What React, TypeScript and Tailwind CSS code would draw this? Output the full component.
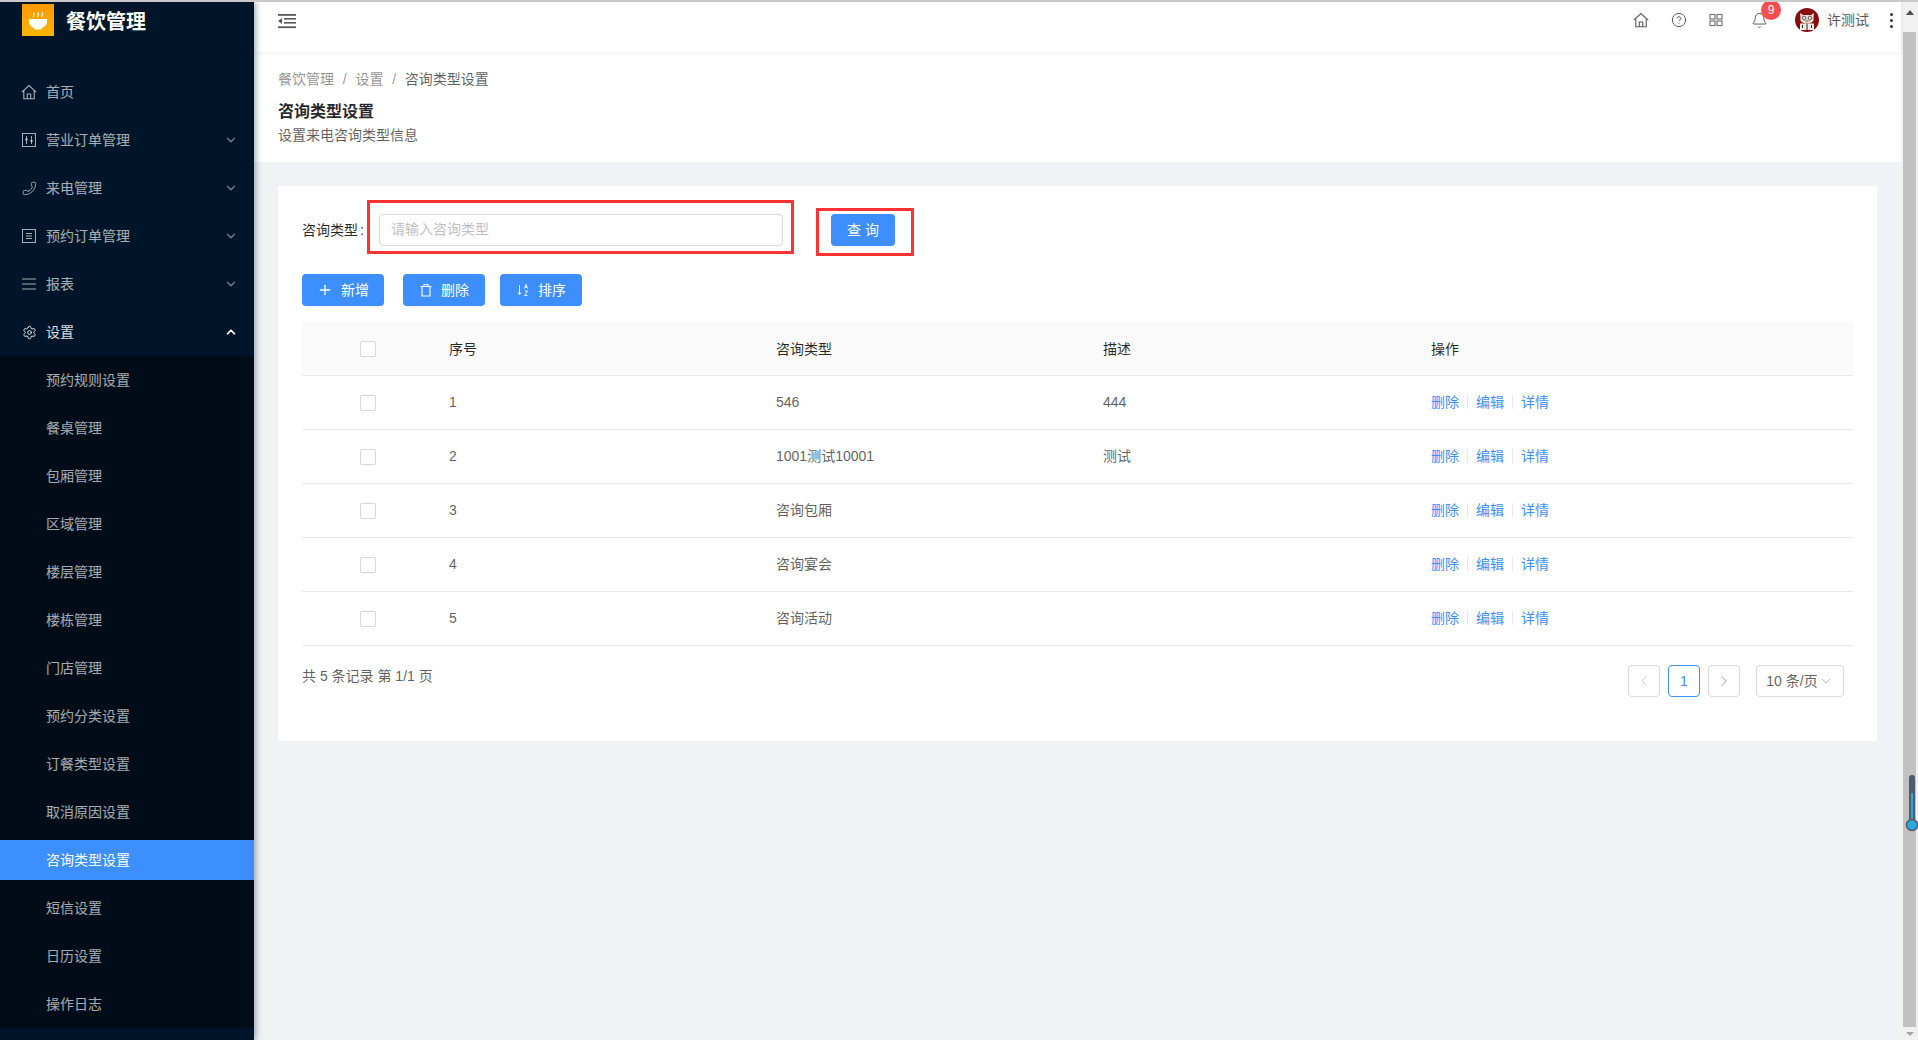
import { Bell, ChevronDown, ChevronLeft, ChevronRight, ChevronUp, CircleHelp, Phone, Plus, Settings } from 'lucide-react'
import type { ReactNode } from 'react'

function HomeIcon({ className }: { className: string }) {
  return (
    <svg viewBox="0 0 16 16" className={className} fill="none" stroke="currentColor" strokeWidth="1.1">
      <path d="M.8 8.200 8 1.500l7.200 6.700" />
      <path d="M2.800 6.500v8.200h10.400V6.500" />
      <path d="M6.300 14.700V10h3.400v4.700" />
    </svg>
  )
}

function OrderIcon() {
  return (
    <svg viewBox="0 0 14 14" className="h-[14px] w-[14px]" fill="none" stroke="currentColor" strokeWidth="1">
      <rect x="0.5" y="0.5" width="13" height="13" />
      <path d="M4.500 3v8M9.500 3v8" />
      <path d="M3.200 6.500h2.600M8.200 8h2.600" strokeWidth="1.400" />
    </svg>
  )
}

function BookIcon() {
  return (
    <svg viewBox="0 0 14 14" className="h-[14px] w-[14px]" fill="none" stroke="currentColor" strokeWidth="1">
      <rect x="0.5" y="0.5" width="13" height="13" />
      <path d="M4 4.500h6M4 7h6M4 9.500h6" />
    </svg>
  )
}

function BarsIcon() {
  return (
    <svg viewBox="0 0 14 14" className="h-[14px] w-[14px]" fill="none" stroke="currentColor" strokeWidth="1.100">
      <path d="M0 2h14M0 7h14M0 12h14" />
    </svg>
  )
}

function CollapseIcon() {
  return (
    <svg viewBox="0 0 18 16" className="h-4 w-[18px]" fill="#595959">
      <rect x="0" y="1" width="18" height="1.800" />
      <rect x="6" y="5" width="12" height="1.600" />
      <rect x="6" y="9" width="12" height="1.600" />
      <rect x="0" y="13.300" width="18" height="1.800" />
      <path d="M0 8 4 5v6z" />
    </svg>
  )
}

function GridIcon() {
  return (
    <svg viewBox="0 0 14 14" className="h-[14px] w-[14px]" fill="none" stroke="#777" strokeWidth="1.200">
      <rect x="1" y="1.500" width="5" height="4.500" />
      <rect x="8" y="1.500" width="5" height="4.500" />
      <rect x="1" y="8" width="5" height="4.500" />
      <rect x="8" y="8" width="5" height="4.500" />
    </svg>
  )
}

function SortIcon() {
  return (
    <svg viewBox="0 0 14 14" className="h-[14px] w-[14px]" fill="none" stroke="currentColor">
      <path d="M3.500 2v9.500M1.800 9.500l1.700 2.200 1.700-2.200" />
      <path d="M8.500 5.500 10 1.500l1.500 4M9 4.200h2M8.700 8h2.800L8.700 12.500h2.800" strokeWidth="0.900" />
    </svg>
  )
}

function TrashIcon() {
  return (
    <svg viewBox="0 0 14 14" className="h-[14px] w-[14px]" fill="none" stroke="currentColor" strokeWidth="1.100">
      <path d="M1.500 3.500h11M5 3.500V1.500h4v2" />
      <path d="M3 3.500v9.500h8V3.500" />
    </svg>
  )
}

function LogoIcon() {
  return (
    <div className="flex h-8 w-8 shrink-0 items-center justify-center bg-gradient-to-b from-[#ff9800] to-[#fdb500]">
      <svg viewBox="0 0 32 32" className="h-8 w-8">
        <path d="M7 15h18v2.500c0 3.500-3 6-5.500 6.500v1.500h-7V24C10 23.500 7 21 7 17.500z" fill="#fff" />
        <path d="M11.500 13c-.8-1.500 1.200-2.500.4-4.500M15.800 13c-.8-1.500 1.200-2.500.4-4.500M20 13c-.8-1.500 1.200-2.500.4-4.500" stroke="#fff" strokeWidth="1.200" fill="none" />
      </svg>
    </div>
  )
}

function Avatar() {
  return (
    <svg viewBox="0 0 24 24" className="h-6 w-6">
      <circle cx="12" cy="12" r="12" fill="#8a0a0a" />
      <path d="M5 5l3 2h8l3-2-.5 5c1 3-1.500 5.500-6.500 5.500S4.500 13 5.500 10z" fill="#e9dcd2" />
      <circle cx="9" cy="10" r="1.800" fill="none" stroke="#333" strokeWidth="0.700" />
      <circle cx="15" cy="10" r="1.800" fill="none" stroke="#333" strokeWidth="0.700" />
      <ellipse cx="12" cy="13" rx="2" ry="1.200" fill="#b89a90" />
      <rect x="5" y="15.500" width="14" height="6.500" fill="#f3eee8" />
      <path d="M12 15.500V22M7.500 17v3M16.500 17v3" stroke="#222" strokeWidth="1" />
    </svg>
  )
}

function Thermometer() {
  return (
    <svg viewBox="0 0 14 62" className="absolute left-[4px] top-[772px] h-[62px] w-[14px]">
      <rect x="4" y="1" width="6" height="50" rx="3" fill="#4d5d6b" />
      <rect x="6" y="19" width="2" height="34" fill="#2aa9e0" />
      <circle cx="7" cy="51" r="5.500" fill="#2aa9e0" stroke="#4d5d6b" strokeWidth="1.500" />
    </svg>
  )
}

const menus: { name: string; icon: ReactNode; arrow?: boolean }[] = [
  { name: '首页', icon: <HomeIcon className="-ml-px h-4 w-4" /> },
  { name: '营业订单管理', icon: <OrderIcon />, arrow: true },
  { name: '来电管理', icon: <Phone size={15} strokeWidth={1.4} className="scale-x-[-1]" />, arrow: true },
  { name: '预约订单管理', icon: <BookIcon />, arrow: true },
  { name: '报表', icon: <BarsIcon />, arrow: true },
]

const subMenus = ['预约规则设置', '餐桌管理', '包厢管理', '区域管理', '楼层管理', '楼栋管理', '门店管理', '预约分类设置', '订餐类型设置', '取消原因设置', '咨询类型设置', '短信设置', '日历设置', '操作日志']

const rows = [
  { id: 1, type: '546', desc: '444' },
  { id: 2, type: '1001测试10001', desc: '测试' },
  { id: 3, type: '咨询包厢', desc: '' },
  { id: 4, type: '咨询宴会', desc: '' },
  { id: 5, type: '咨询活动', desc: '' },
]

const gridCols = 'grid grid-cols-[131px_327px_327px_328px_1fr] items-center'

function Check() {
  return <span className="mx-auto block h-4 w-4 rounded-[2px] border border-[#d9d9d9] bg-white" />
}

function Sidebar() {
  return (
    <aside className="relative z-20 flex w-[254px] shrink-0 flex-col bg-[#001529] text-sm text-white/65 shadow-[2px_0_6px_rgba(0,21,41,0.35)]">
      <div className="flex h-[66px] gap-3 pl-[22px] pt-[2px]">
        <LogoIcon />
        <span className="mt-[2px] text-[20px] font-bold leading-8 text-white">餐饮管理</span>
      </div>
      {menus.map((m) => (
        <div key={m.name} className="flex h-12 items-center pl-[22px] pr-4">
          <span className="w-6 shrink-0">{m.icon}</span>
          <span className="flex-1 pb-px">{m.name}</span>
          {m.arrow && <ChevronDown size={14} strokeWidth={2.4} className="text-white/45" />}
        </div>
      ))}
      <div className="flex h-12 items-center pl-[22px] pr-4 text-white/85">
        <span className="w-6 shrink-0">
          <Settings size={15} strokeWidth={1.6} />
        </span>
        <span className="flex-1 pb-px">设置</span>
        <ChevronUp size={14} strokeWidth={3} className="text-white" />
      </div>
      <div className="flex flex-col bg-[#000c17]">
        {subMenus.map((s, i) => (
          <div
            key={s}
            className={i === 10 ? 'my-1 flex h-10 items-center bg-[#3d8fff] pb-px pl-[46px] text-white' : 'my-1 flex h-10 items-center pb-px pl-[46px]'}
          >
            {s}
          </div>
        ))}
      </div>
    </aside>
  )
}

function TopBar() {
  return (
    <header className="relative z-10 flex h-[50px] shrink-0 items-center justify-between bg-white pl-6 pr-[8px] shadow-[0_1px_4px_rgba(0,21,41,0.08)]">
      <div className="-mt-[12px]">
        <CollapseIcon />
      </div>
      <div className="-mt-[14px] flex items-center text-[#595959]">
        <HomeIcon className="mr-[22px] h-4 w-4" />
        <CircleHelp size={16} strokeWidth={1.5} className="mr-[22px]" />
        <GridIcon />
        <div className="relative ml-[28px] mr-[27px]">
          <Bell size={17} strokeWidth={1.4} />
          <span className="absolute -right-[13px] -top-[12px] flex h-5 min-w-5 items-center justify-center rounded-full bg-[#ff4d4f] text-xs font-medium text-white">9</span>
        </div>
        <Avatar />
        <span className="ml-2 text-sm">许测试</span>
        <span className="ml-[21px] flex flex-col gap-[3px]">
          <i className="block h-[3px] w-[3px] rounded-full bg-[#333]" />
          <i className="block h-[3px] w-[3px] rounded-full bg-[#333]" />
          <i className="block h-[3px] w-[3px] rounded-full bg-[#333]" />
        </span>
      </div>
    </header>
  )
}

function PageHead() {
  return (
    <div className="h-[110px] shrink-0 bg-white px-6 pt-4">
      <div className="flex h-[22px] items-center text-sm text-black/45">
        <span>餐饮管理</span>
        <span className="mx-[8.75px]">/</span>
        <span>设置</span>
        <span className="mx-[8.75px]">/</span>
        <span className="text-black/65">咨询类型设置</span>
      </div>
      <div className="mt-[10px] text-base font-semibold leading-6 text-black/85">咨询类型设置</div>
      <div className="text-sm leading-[22px] text-black/65">设置来电咨询类型信息</div>
    </div>
  )
}

function ActionButton({ icon, label }: { icon: ReactNode; label: string }) {
  return (
    <button className="flex h-8 w-[82px] items-center justify-center gap-2 rounded bg-[#3d8fff] text-sm text-white shadow-[0_2px_0_rgba(0,0,0,0.03)]">
      {icon}
      {label}
    </button>
  )
}

function SearchBar() {
  return (
    <div className="flex h-8 items-center text-sm text-black/65">
      <span className="w-[77px] whitespace-nowrap text-black/85">
        咨询类型<span className="ml-0.5">:</span>
      </span>
      <div className="relative">
        <input
          placeholder="请输入咨询类型"
          className="h-8 w-[404px] rounded border border-[#d9d9d9] px-[11px] pb-[2px] text-sm outline-none placeholder:text-[#bfbfbf]"
        />
        <span className="pointer-events-none absolute -left-[12px] -top-[14px] h-[54px] w-[427px] border-[3px] border-[#ff3333]" />
      </div>
      <div className="relative ml-[48px]">
        <button className="h-8 w-16 rounded bg-[#3d8fff] text-sm text-white shadow-[0_2px_0_rgba(0,0,0,0.03)]">查 询</button>
        <span className="pointer-events-none absolute -left-[15px] -top-[6px] h-[48px] w-[98px] border-[3px] border-[#ff3333]" />
      </div>
    </div>
  )
}

function DataTable() {
  return (
    <div className="mt-4 text-sm">
      <div className={`${gridCols} h-[54px] border-b border-[#e8e8e8] bg-[#fafafa] text-black/85`}>
        <Check />
        <span className="pl-4">序号</span>
        <span className="pl-4">咨询类型</span>
        <span className="pl-4">描述</span>
        <span className="pl-4">操作</span>
      </div>
      {rows.map((r) => (
        <div key={r.id} className={`${gridCols} h-[54px] border-b border-[#e8e8e8] text-black/65`}>
          <Check />
          <span className="pb-px pl-4">{r.id}</span>
          <span className="pb-px pl-4">{r.type}</span>
          <span className="pb-px pl-4">{r.desc}</span>
          <span className="flex items-center gap-2 pb-px pl-4 text-[#3d8fff]">
            删除
            <i className="block h-[14px] w-px bg-[#e8e8e8]" />
            编辑
            <i className="block h-[14px] w-px bg-[#e8e8e8]" />
            详情
          </span>
        </div>
      ))}
    </div>
  )
}

function Pager() {
  return (
    <div className="mt-[19px] flex items-start justify-between pr-[9px] text-sm text-black/65">
      <span className="leading-[22px]">共 5 条记录 第 1/1 页</span>
      <div className="flex items-center">
        <span className="flex h-8 w-8 items-center justify-center rounded border border-[#d9d9d9] text-[#bfbfbf]">
          <ChevronLeft size={18} strokeWidth={1.1} />
        </span>
        <span className="ml-2 flex h-8 w-8 items-center justify-center rounded border border-[#3d8fff] text-[#3d8fff]">1</span>
        <span className="ml-2 flex h-8 w-8 items-center justify-center rounded border border-[#d9d9d9] text-[#8c8c8c]">
          <ChevronRight size={18} strokeWidth={1.1} />
        </span>
        <span className="ml-4 flex h-8 w-[88px] items-center justify-center rounded border border-[#d9d9d9]">
          10 条/页
          <ChevronDown size={16} strokeWidth={1} className="text-[#a0a0a0]" />
        </span>
      </div>
    </div>
  )
}

function Scrollbar() {
  return (
    <div className="relative flex w-[17px] shrink-0 flex-col items-center bg-[#f1f1f1]">
      <span className="mt-2 h-0 w-0 border-x-[4px] border-b-[5px] border-x-transparent border-b-[#505050]" />
      <span className="mt-[17px] h-[995px] w-[13px] bg-[#c1c1c1]" />
      <span className="mt-[5px] h-0 w-0 border-x-[4px] border-t-[4px] border-x-transparent border-t-[#a3a3a3]" />
      <Thermometer />
    </div>
  )
}

export default function App() {
  return (
    <div className="flex h-[1040px] w-[1918px] overflow-hidden border-t-2 border-[#c9c9c9] bg-[#f0f2f5] [font-family:'Liberation_Sans','Noto_Sans_CJK_SC',sans-serif]">
      <Sidebar />
      <main className="flex min-w-0 flex-1 flex-col">
        <TopBar />
        <PageHead />
        <div className="flex-1 p-6">
          <section className="h-[555px] bg-white px-6 pt-7">
            <SearchBar />
            <div className="mt-7 flex">
              <ActionButton icon={<Plus size={16} strokeWidth={2} />} label="新增" />
              <span className="ml-[19px]">
                <ActionButton icon={<TrashIcon />} label="删除" />
              </span>
              <span className="ml-[15px]">
                <ActionButton icon={<SortIcon />} label="排序" />
              </span>
            </div>
            <DataTable />
            <Pager />
          </section>
        </div>
      </main>
      <Scrollbar />
    </div>
  )
}
